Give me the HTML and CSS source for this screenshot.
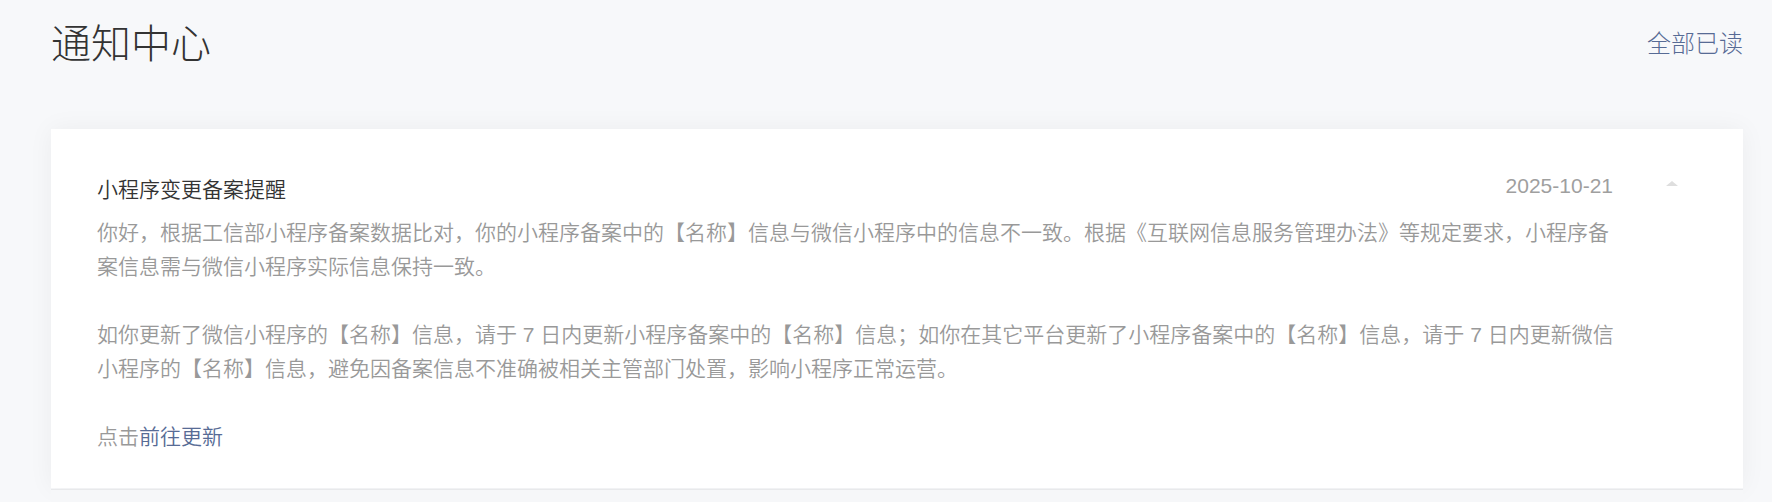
FILE: index.html
```html
<!DOCTYPE html>
<html lang="zh-CN">
<head>
<meta charset="utf-8">
<title>通知中心</title>
<link rel="stylesheet" href="styles.css">
</head>
<body>
<div class="page">
  <header class="header">
    <h1 class="page-title">通知中心</h1>
    <a class="read-all" href="#">全部已读</a>
  </header>
  <section class="list">
    <article class="card">
      <div class="card-head">
        <h2 class="card-title">小程序变更备案提醒</h2>
        <span class="card-date">2025-10-21</span>
        <span class="caret"></span>
      </div>
      <div class="card-body">
        <p>你好，根据工信部小程序备案数据比对，你的小程序备案中的【名称】信息与微信小程序中的信息不一致。根据《互联网信息服务管理办法》等规定要求，小程序备案信息需与微信小程序实际信息保持一致。</p>
        <p>如你更新了微信小程序的【名称】信息，请于 7 日内更新小程序备案中的【名称】信息；如你在其它平台更新了小程序备案中的【名称】信息，请于 7 日内更新微信小程序的【名称】信息，避免因备案信息不准确被相关主管部门处置，影响小程序正常运营。</p>
        <p>点击<a class="link" href="#">前往更新</a></p>
      </div>
    </article>
    <article class="card card-next"></article>
  </section>
</div>
</body>
</html>
```
FILE: styles.css
```css
html, body {
  margin: 0;
  padding: 0;
  height: 100%;
  overflow: hidden;
}
body {
  background: #f7f8fa;
  font-family: "Liberation Sans", "Noto Sans CJK SC", sans-serif;
  color: #353535;
}
.page {
  padding: 0 29px 0 51px;
}
.header {
  height: 88px;
  display: flex;
  align-items: center;
  justify-content: space-between;
}
.page-title {
  margin: 0;
  font-size: 40px;
  font-weight: 300;
  line-height: 56px;
  color: #333;
}
.read-all {
  font-size: 24px;
  font-weight: 300;
  line-height: 34px;
  color: #576b95;
  text-decoration: none;
}
.list {
  margin-top: 41px;
}
.card {
  background: #fff;
  padding: 44px 65px 34px 46px;
  box-shadow: 0 0 24px rgba(0, 0, 0, 0.05);
}
.card-head {
  display: flex;
  align-items: center;
  height: 34px;
  margin-bottom: 9px;
}
.card-title {
  flex: 1;
  margin: 0;
  font-size: 21px;
  font-weight: 350;
  line-height: 34px;
  color: #333;
}
.card-date {
  font-size: 21px;
  line-height: 34px;
  color: #9f9f9f;
  position: relative;
  top: -4px;
}
.caret {
  margin-left: 53px;
  width: 0;
  height: 0;
  border-left: 6px solid transparent;
  border-right: 6px solid transparent;
  border-bottom: 5px solid #dedede;
  position: relative;
  top: -7px;
}
.card-body {
  margin-right: 56px;
  font-size: 21px;
  font-weight: 350;
  line-height: 34px;
  color: #999;
}
.card-body p {
  margin: 0 0 34px;
}
.card-body p:last-child {
  margin-bottom: 0;
}
.link {
  color: #576b95;
  text-decoration: none;
}
.card-next {
  margin-top: 1px;
  height: 40px;
  padding: 0;
  background: #f6f7f9;
  border-top: 1px solid #e8e9eb;
  box-shadow: none;
}
```
